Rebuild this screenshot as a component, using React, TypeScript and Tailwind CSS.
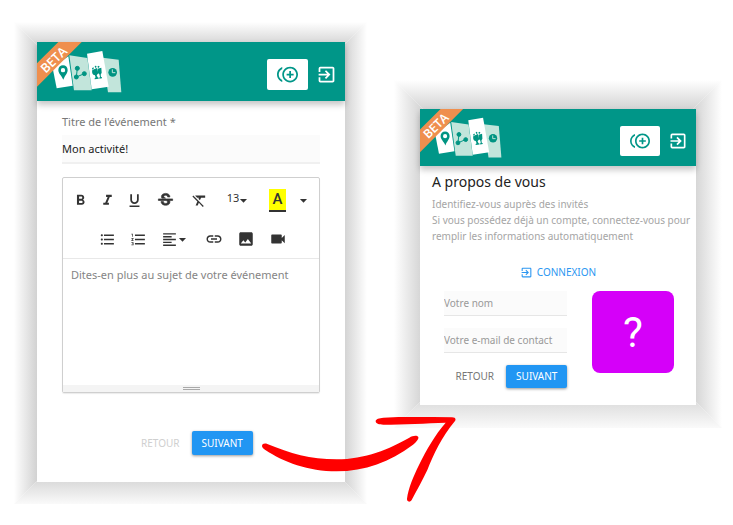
import type { ReactNode } from "react";
import {
  MdArrowDropDown,
  MdControlPointDuplicate,
  MdExitToApp,
  MdFormatAlignLeft,
  MdFormatBold,
  MdFormatClear,
  MdFormatItalic,
  MdFormatListBulleted,
  MdFormatListNumbered,
  MdFormatUnderlined,
  MdImage,
  MdLink,
  MdVideocam,
} from "react-icons/md";

function Bevel() {
  return (
    <div aria-hidden="true" className="absolute inset-0 -z-10">
      <div className="absolute inset-y-0 left-0 w-(--band) bg-linear-to-l from-[#d2d2d2] to-white [clip-path:polygon(0_0,100%_var(--band),100%_calc(100%-var(--band)),0_100%)]" />
      <div className="absolute inset-y-0 right-0 w-(--band) bg-linear-to-r from-[#d2d2d2] to-white [clip-path:polygon(100%_0,0_var(--band),0_calc(100%-var(--band)),100%_100%)]" />
      <div className="absolute inset-x-0 top-0 h-(--band) bg-linear-to-t from-[#d4d4d4] to-white [clip-path:polygon(0_0,100%_0,calc(100%-var(--band))_100%,var(--band)_100%)]" />
      <div className="absolute inset-x-0 bottom-0 h-(--band) bg-linear-to-b from-[#dadada] to-[#fafafa] [clip-path:polygon(var(--band)_0,calc(100%-var(--band))_0,100%_100%,0_100%)]" />
    </div>
  );
}

function Logo({ className }: { className: string }) {
  return (
    <svg viewBox="0 0 258 177" className={className} role="img" aria-label="Logo">
      <polygon points="47,78 94,43 107,131 59,139" fill="#fff" />
      <polygon points="97,40 151,48 164,145 111,145" fill="#c2e5db" />
      <polygon points="197,47 245,53 253,151 213,151" fill="#c2e5db" />
      <polygon points="150,35 196,27 215,134 164,142" fill="#fff" />
      <path
        d="M78 70c-8 0-14 6-14 14 0 10 9 16 15 29 5-13 13-19 13-29 0-8-6-14-14-14zm0 8a6 6 0 1 1 0 13 6 6 0 0 1 0-13z"
        fill="#009482"
        fillRule="evenodd"
      />
      <g fill="#009482" stroke="#009482" strokeWidth="3">
        <path d="M121 79L118 105L142 95" fill="none" />
        <circle cx="121" cy="79" r="6" />
        <circle cx="118" cy="105" r="6" />
        <circle cx="142" cy="95" r="6" />
      </g>
      <g fill="#009482">
        <path d="M166 84l14-6 4 16-5 6 3 6 3 1v3l-12 2v-3l3-3-3-7c-7 0-9-8-7-15z" />
        <path d="M182 80l11-3 1 15-3 6 1 7 3 1v3l-8 1v-3l2-3-2-7-5-5z" />
        <path d="M165 79l4-3 2 3-5 4zM173 72l4-1 2 4-4 3zM181 74l4-3 3 3-4 4z" />
      </g>
      <circle cx="227" cy="91" r="13" fill="#009482" />
      <path d="M226 82v10h9" fill="none" stroke="#c2e5db" strokeWidth="3" />
      <polygon points="64,0 134,0 0,134 0,64" fill="#ef8f4e" />
      <text
        x="49"
        y="52"
        fontSize="38"
        fontWeight="600"
        fill="#fff"
        textAnchor="middle"
        dominantBaseline="central"
        transform="rotate(-44 49 52)"
        fontFamily="Open Sans, Noto Sans, sans-serif"
      >
        BETA
      </text>
    </svg>
  );
}

function StrikeIcon() {
  return (
    <svg viewBox="0 0 24 24" className="size-[19px]" fill="currentColor" stroke="currentColor" strokeWidth="0.8">
      <path d="M6.85 7.08C6.85 4.37 9.45 3 12.24 3c1.64 0 3 .49 3.9 1.28.77.65 1.46 1.73 1.46 3.24h-3.01c0-.31-.05-.59-.15-.85-.29-.86-1.2-1.28-2.25-1.28-1.86 0-2.34 1.02-2.34 1.7 0 .48.25.88.74 1.21.38.25.77.48 1.41.7H7.39c-.21-.34-.54-.89-.54-1.92zM21 12v-2H3v2h9.62c1.15.45 1.96.75 1.96 1.97 0 1-.81 1.67-2.28 1.67-1.54 0-2.93-.54-2.93-2.51H6.4c0 .55.08 1.13.24 1.58.81 2.29 3.29 3.3 5.67 3.3 2.27 0 5.3-.89 5.3-4.05 0-.3-.01-1.16-.48-1.94H21z" />
    </svg>
  );
}

function Header({ compact = false }: { compact?: boolean }) {
  return (
    <header
      className={`relative flex items-start justify-between bg-[#009688] pr-2 shadow-[0_4px_6px_rgba(0,0,0,0.22)] ${compact ? "h-[57px]" : "h-[59px]"}`}
    >
      <Logo className={compact ? "h-[57px] w-[83px]" : "h-[59px] w-[86px]"} />
      <div className="flex items-center gap-2 pt-[17px] text-white">
        <button
          type="button"
          aria-label="Nouveau"
          className={`flex items-center justify-center rounded-xs bg-white text-[#009688] ${compact ? "h-[30px] w-10" : "h-[31px] w-[41px]"}`}
        >
          <MdControlPointDuplicate size={compact ? 20 : 21} />
        </button>
        <button type="button" aria-label="Connexion">
          <MdExitToApp size={compact ? 20 : 21} />
        </button>
      </div>
    </header>
  );
}

function Tool({ label, className, children }: { label: string; className: string; children: ReactNode }) {
  return (
    <button type="button" aria-label={label} className={`flex h-full items-center justify-center ${className}`}>
      {children}
    </button>
  );
}

function Editor() {
  return (
    <div className="mt-[13px] rounded-xs border border-[#cfcfcf] shadow-[0_1px_1px_rgba(0,0,0,0.08)]">
      <div className="border-b border-[#e8e8e8] pt-[3px] text-[17px] text-[#333]">
        <div className="flex h-[39px] items-center justify-center pr-1">
          <Tool label="Gras" className="w-[27px]"><MdFormatBold /></Tool>
          <Tool label="Italique" className="w-[27px]"><MdFormatItalic /></Tool>
          <Tool label="Souligné" className="w-[27px]"><MdFormatUnderlined /></Tool>
          <Tool label="Barré" className="w-9"><StrikeIcon /></Tool>
          <Tool label="Effacer la mise en forme" className="w-8"><MdFormatClear /></Tool>
          <Tool label="Taille" className="w-11 pl-1">
            <span className="pb-1 text-[11px]">13</span>
            <MdArrowDropDown className="-ml-1" />
          </Tool>
          <Tool label="Couleur" className="w-9">
            <span className="flex h-[23px] w-[17px] items-center justify-center border-b-2 border-[#333] bg-[#ff0] font-['Roboto',sans-serif] text-[15px] font-medium">
              A
            </span>
          </Tool>
          <Tool label="Plus de couleurs" className="w-4">
            <MdArrowDropDown className="shrink-0" />
          </Tool>
        </div>
        <div className="flex h-[38px] items-center justify-center pl-1">
          <Tool label="Liste à puces" className="w-[31px]"><MdFormatListBulleted /></Tool>
          <Tool label="Liste numérotée" className="w-[31px]"><MdFormatListNumbered /></Tool>
          <Tool label="Alignement" className="w-11">
            <MdFormatAlignLeft />
            <MdArrowDropDown className="-ml-1" />
          </Tool>
          <Tool label="Lien" className="w-8"><MdLink size={18} /></Tool>
          <Tool label="Image" className="w-8"><MdImage size={18} /></Tool>
          <Tool label="Vidéo" className="w-8"><MdVideocam size={18} /></Tool>
        </div>
      </div>
      <textarea
        aria-label="Description"
        placeholder="Dites-en plus au sujet de votre événement"
        className="block h-[126px] w-full resize-none px-2 py-[7px] text-[11px] leading-[18px] placeholder-[#858585] outline-none"
      />
      <div className="flex h-[7px] items-center justify-center bg-[#f4f4f4]">
        <div className="h-[3px] w-[17px] border-y border-[#a9a9a9]" />
      </div>
    </div>
  );
}

function Actions({ muted = false, className }: { muted?: boolean; className: string }) {
  return (
    <div className={`flex justify-center text-[10px] ${className}`}>
      <button type="button" disabled={muted} className={`px-3 ${muted ? "text-[#cfcfcf]" : "text-[#777]"}`}>
        RETOUR
      </button>
      <button
        type="button"
        className="rounded-xs bg-[#2196f3] px-[10px] text-white shadow-[0_1px_3px_rgba(0,0,0,0.4)]"
      >
        SUIVANT
      </button>
    </div>
  );
}

function Arrow() {
  return (
    <svg
      aria-hidden="true"
      viewBox="63 138 585 261"
      className="pointer-events-none absolute top-[336px] -left-[133px] h-[87px] w-[195px]"
      fill="#f00"
    >
      <path d="M66 228C66 221 74 219 82 222C150 250 210 268 290 268C375 268 450 236 508 203C518 197 531 195 535 201C537 208 526 219 518 225C450 276 375 304 290 304C205 304 130 276 76 240C70 236 66 232 66 228Z" />
      <path d="M407 154C407 147 418 144 430 143C500 140 570 142 636 142C645 142 649 147 645 153C605 200 580 255 562 300C547 332 530 362 515 390C510 398 500 396 501 386C505 355 520 320 537 285C560 238 585 195 617 158C560 160 490 164 430 164C417 164 407 161 407 154Z" />
    </svg>
  );
}

const fieldClass =
  "block h-[25px] w-full rounded-none border-b border-[#e6e6e6] bg-[#fbfbfb] text-[10px] outline-none placeholder-[#999]";

export default function App() {
  return (
    <main className="grid min-h-screen grid-cols-[353fr_328fr] items-start gap-[27px] bg-white pt-[22px] pr-[11px] pb-[21px] pl-[14px] font-['Noto_Sans',sans-serif]">
      <section className="relative isolate min-w-0 pt-5 pr-[22px] pb-[22px] pl-[23px] [--band:23px]">
        <Bevel />
        <div className="bg-white">
          <Header />
          <form className="px-[25px] pt-3 pb-[27px]">
            <label htmlFor="title" className="block text-[11px] leading-[18px] text-[#777]">
              Titre de l'événement *
            </label>
            <input
              id="title"
              defaultValue="Mon activité!"
              className="mt-1 block h-[29px] w-full border-b-2 border-[#f0f0f0] bg-[#fbfbfb] text-[11px] text-[#222] outline-none"
            />
            <Editor />
            <Actions muted className="mt-[38px] h-6" />
          </form>
        </div>
      </section>

      <section className="relative isolate mt-[58px] min-w-0 px-[26px] pt-[29px] pb-[23px] [--band:29px]">
        <Bevel />
        <div className="bg-white">
          <Header compact />
          <div className="pt-1 pb-[17px]">
            <h1 className="pl-3 text-[14px] leading-6 text-[#222]">A propos de vous</h1>
            <p className="mt-[2px] pl-3 text-[10px] leading-4 text-[#a5a5a5]">
              Identifiez-vous auprès des invités
              <br />
              Si vous possédez déjà un compte, connectez-vous pour remplir les informations automatiquement
            </p>
            <a href="#connexion" className="mt-[18px] flex h-5 items-center justify-center gap-1 text-[10px] text-[#2b96f1]">
              <MdExitToApp size={13} />
              CONNEXION
            </a>
            <form className="mt-[9px] flex items-start gap-[25px] pr-[22px] pl-6">
              <div className="min-w-0 flex-1">
                <input aria-label="Votre nom" placeholder="Votre nom" className={fieldClass} />
                <input
                  type="email"
                  aria-label="Votre e-mail de contact"
                  placeholder="Votre e-mail de contact"
                  className={`mt-3 ${fieldClass}`}
                />
                <Actions className="mt-3 h-[23px]" />
              </div>
              <div className="flex size-[82px] items-center justify-center rounded-lg bg-[#d500f9] font-['Roboto',sans-serif] text-[42px] text-white">
                ?
              </div>
            </form>
          </div>
        </div>
        <Arrow />
      </section>
    </main>
  );
}
